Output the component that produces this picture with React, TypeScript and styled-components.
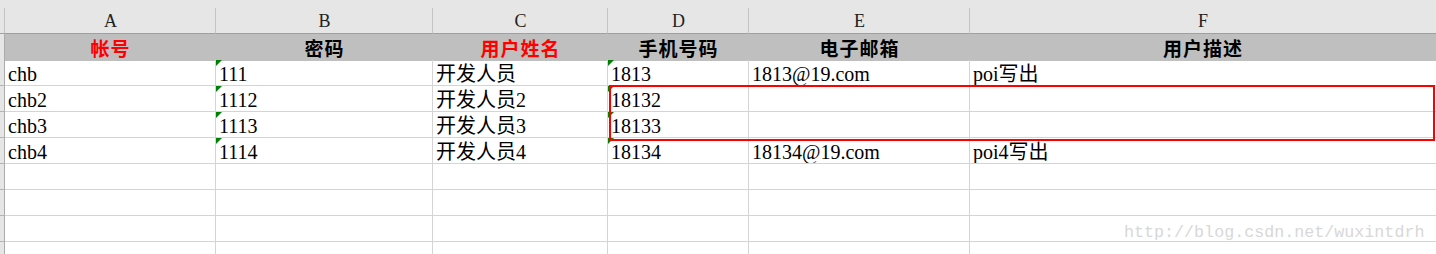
import React from 'react'
import styled, { createGlobalStyle } from 'styled-components'

const GlobalStyle = createGlobalStyle`
    body{
        margin: 0;
        background: #ffffff;
        overflow: hidden;
    }
`

const COLUMNS = '5px 211px 217px 175px 141px 221px 466px'
const CELL_FONT = `'Liberation Serif', 'Noto Sans CJK SC', serif`

const Sheet = styled.div`
    position: relative;
    width: 1436px;
    height: 254px;
    overflow: hidden;
    background: #ffffff;
    font-family: ${CELL_FONT};
`

const TopStrip = styled.div`
    height: 8px;
    background: #e6e6e6;
`

const Row = styled.div`
    display: grid;
    grid-template-columns: ${COLUMNS};
    height: 26px;
`

const Corner = styled.div`
    box-sizing: border-box;
    background: #e6e6e6;
    border-bottom: 1px solid #a0a0a0;
`

const LetterCell = styled.div`
    box-sizing: border-box;
    display: flex;
    align-items: flex-end;
    justify-content: center;
    padding-bottom: 1px;
    background: #e6e6e6;
    border-left: 1px solid #c4c4c4;
    border-bottom: 1px solid #a0a0a0;
    margin-left: -1px;
    font-size: 18px;
    line-height: 22px;
    color: #222222;
`

const RowHead = styled.div`
    box-sizing: border-box;
    background: #e6e6e6;
    border-right: 1px solid #ababab;
    border-bottom: 1px solid #b4b4b4;
`

const TitleCell = styled.div<{ $red?: boolean }>`
    display: flex;
    align-items: center;
    justify-content: center;
    background: #bfbfbf;
    font-family: 'Noto Sans CJK SC', sans-serif;
    font-weight: 700;
    font-size: 19px;
    letter-spacing: 1px;
    color: ${props => props.$red ? '#ff0000' : '#000000'};
`

const Cell = styled.div<{ $last?: boolean }>`
    position: relative;
    box-sizing: border-box;
    display: flex;
    align-items: flex-end;
    padding-left: 3px;
    border-right: ${props => props.$last ? 'none' : '1px solid #d4d4d4'};
    border-bottom: 1px solid #d4d4d4;
    font-size: 20px;
    line-height: 22px;
    color: #000000;
    white-space: nowrap;
    overflow: hidden;
`

// little green flag Excel puts on numbers stored as text
const TextFlag = styled.span`
    position: absolute;
    top: 0;
    left: 0;
    width: 0;
    height: 0;
    border-top: 6px solid #008000;
    border-right: 6px solid transparent;
`

const Selection = styled.div`
    position: absolute;
    left: 609px;
    top: 85px;
    width: 826px;
    height: 56px;
    box-sizing: border-box;
    border: 2px solid #ff0000;
    pointer-events: none;
`

const Watermark = styled.div`
    position: absolute;
    left: 1124px;
    top: 223px;
    font-family: 'Liberation Mono', monospace;
    font-size: 16.7px;
    color: #d8d8d8;
    white-space: nowrap;
`

const letters = ['A', 'B', 'C', 'D', 'E', 'F']

const titles = [
    { text: '帐号', red: true },
    { text: '密码', red: false },
    { text: '用户姓名', red: true },
    { text: '手机号码', red: false },
    { text: '电子邮箱', red: false },
    { text: '用户描述', red: false },
]

const users = [
    ['chb', '111', '开发人员', '1813', '1813@19.com', 'poi写出'],
    ['chb2', '1112', '开发人员2', '18132', '', ''],
    ['chb3', '1113', '开发人员3', '18133', '', ''],
    ['chb4', '1114', '开发人员4', '18134', '18134@19.com', 'poi4写出'],
    ['', '', '', '', '', ''],
    ['', '', '', '', '', ''],
    ['', '', '', '', '', ''],
    ['', '', '', '', '', ''],
]

// password and phone columns hold numbers typed as text
const flagged = [1, 3]

export default function App() {
    return (
        <>
            <GlobalStyle />
            <Sheet>
                <TopStrip />
                <Row>
                    <Corner />
                    {letters.map(l => <LetterCell key={l}>{l}</LetterCell>)}
                </Row>
                <Row>
                    <RowHead />
                    {titles.map(t => <TitleCell key={t.text} $red={t.red}>{t.text}</TitleCell>)}
                </Row>
                {users.map((row, r) => (
                    <Row key={r}>
                        <RowHead />
                        {row.map((value, c) => (
                            <Cell key={c} $last={c === row.length - 1}>
                                {value && flagged.includes(c) && <TextFlag />}
                                {value}
                            </Cell>
                        ))}
                    </Row>
                ))}
                <Selection />
                <Watermark>http://blog.csdn.net/wuxintdrh</Watermark>
            </Sheet>
        </>
    )
}
